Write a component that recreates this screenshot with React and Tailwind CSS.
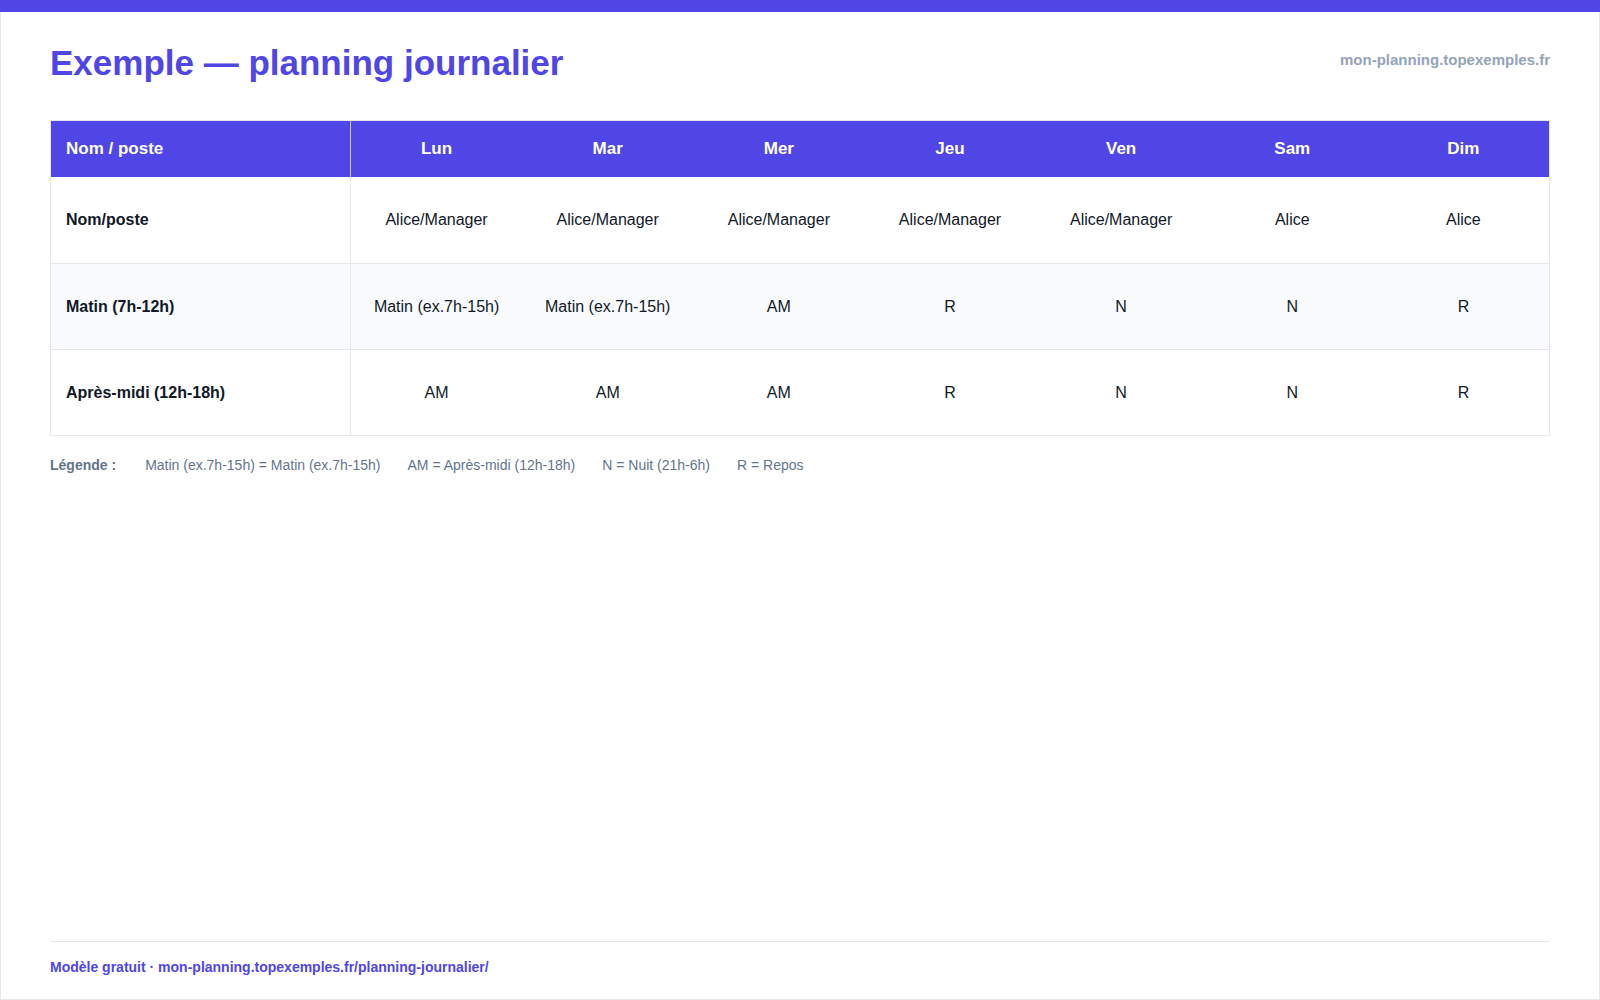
export default function App() {
  const days = ["Lun", "Mar", "Mer", "Jeu", "Ven", "Sam", "Dim"];
  const rows = [
    ["Nom/poste", ["Alice/Manager","Alice/Manager","Alice/Manager","Alice/Manager","Alice/Manager","Alice","Alice"], "bg-white"],
    ["Matin (7h-12h)", ["Matin (ex.7h-15h)","Matin (ex.7h-15h)","AM","R","N","N","R"], "bg-[#f8fafc]"],
    ["Après-midi (12h-18h)", ["AM","AM","AM","R","N","N","R"], "bg-white"],
  ];
  return (
    <div className="w-[1600px] h-[1000px] bg-white flex flex-col border border-[#e5e7eb] border-t-0" style={{ fontFamily: '"Liberation Sans", Arial, sans-serif' }}>
      <div className="h-[12px] bg-[#4f46e5] -mx-px" />
      <div className="flex-1 flex flex-col px-[49px]">
        <div className="flex justify-between items-center h-[100px] pt-[2px]">
          <h1 className="text-[35px] font-bold text-[#4f46e5]">Exemple — planning journalier</h1>
          <div className="text-[15px] font-bold text-[#94a3b8] -mt-[6px]">mon-planning.topexemples.fr</div>
        </div>
        <div className="mt-[8px] border border-[#e5e7eb]">
          <div className="flex h-[56px] bg-[#4f46e5] text-white font-bold text-[17px]">
            <div className="w-[300px] flex items-center pl-[15px] border-r border-[#c7c4f5]">Nom / poste</div>
            {days.map(d => <div key={d} className="flex-1 flex items-center justify-center">{d}</div>)}
          </div>
          {rows.map(([label, cells, bg], i) => (
            <div key={i} className={`flex h-[86px] text-[16px] text-[#111827] ${bg} ${i > 0 ? "border-t border-[#e5e7eb]" : ""}`}>
              <div className="w-[300px] flex items-center pl-[15px] font-bold border-r border-[#e5e7eb]">{label}</div>
              {cells.map((c, j) => <div key={j} className="flex-1 flex items-center justify-center">{c}</div>)}
            </div>
          ))}
        </div>
        <div className="flex gap-[27px] mt-[19px] text-[14px] text-[#64748b]">
          <span className="font-bold mr-[2px]">Légende :</span>
          <span>Matin (ex.7h-15h) = Matin (ex.7h-15h)</span>
          <span>AM = Après-midi (12h-18h)</span>
          <span>N = Nuit (21h-6h)</span>
          <span>R = Repos</span>
        </div>
        <div className="flex-1" />
        <div className="border-t border-[#e5e7eb] pt-[15px] pb-[21px] text-[14px] font-bold text-[#4f46e5]">
          Modèle gratuit · mon-planning.topexemples.fr/planning-journalier/
        </div>
      </div>
    </div>
  );
}
